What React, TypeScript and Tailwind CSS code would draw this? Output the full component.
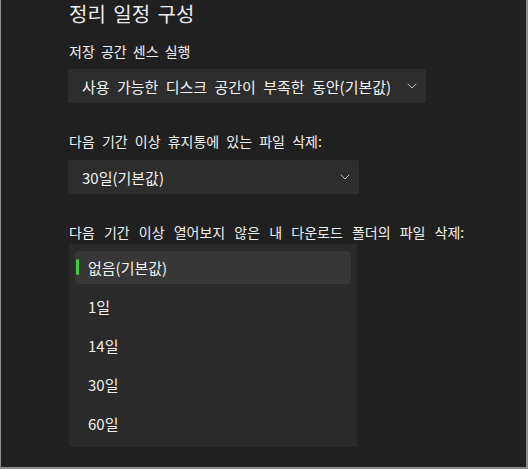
import { ChevronDown } from "lucide-react";

const FONT = { fontFamily: '"Noto Sans CJK KR", "Noto Sans", sans-serif' };

const OPTIONS = ["없음(기본값)", "1일", "14일", "30일", "60일"];

function Select({ value, width }: { value: string; width: string }) {
  return (
    <div
      className={`flex h-[34px] items-center justify-between rounded-[2px] bg-[#2d2d2d] pl-[14px] pr-[6px] ${width}`}
    >
      <span className="text-[15px] leading-none text-[#f2f2f2] [word-spacing:4px]">{value}</span>
      <ChevronDown size={16} strokeWidth={1.4} className="text-[#c4c4c4]" />
    </div>
  );
}

function Flyout({ selected }: { selected: number }) {
  return (
    <div className="ml-[1px] flex w-[288px] flex-col bg-[#2a2a2a] py-[4px]">
      {OPTIONS.map((opt, i) => (
        <div key={opt} className="flex h-[39px] items-center px-[6px] py-[3px]">
          <div
            className={
              "relative flex h-full w-full items-center rounded-[4px] pl-[13px] " +
              (i === selected ? "bg-[#373737]" : "")
            }
          >
            {i === selected && (
              <span className="absolute left-[1px] top-[8px] h-[16px] w-[3px] rounded-full bg-[#3cd03c]" />
            )}
            <span className="text-[15px] leading-none text-[#f0f0f0]">{opt}</span>
          </div>
        </div>
      ))}
    </div>
  );
}

export default function App() {
  return (
    <div
      className="h-[469px] w-[528px] overflow-hidden border-b-2 border-l border-r-2 border-[#8c8c8c] bg-[#202020]"
      style={FONT}
    >
      <div className="flex flex-col pl-[67px] pt-[1px]">
        <h1 className="ml-[1px] text-[20px] leading-[26px] text-[#ececec] [word-spacing:3px]">
          정리 일정 구성
        </h1>

        <p className="ml-[1px] mt-[14px] text-[14px] leading-[20px] text-[#f0f0f0] [word-spacing:3px]">
          저장 공간 센스 실행
        </p>
        <div className="mt-[8px]">
          <Select value="사용 가능한 디스크 공간이 부족한 동안(기본값)" width="w-[358px]" />
        </div>

        <p className="ml-[1px] mt-[28px] text-[14px] leading-[20px] text-[#f0f0f0] [word-spacing:4px]">
          다음 기간 이상 휴지통에 있는 파일 삭제:
        </p>
        <div className="mt-[9px]">
          <Select value="30일(기본값)" width="w-[291px]" />
        </div>

        <p className="ml-[1px] mt-[28px] text-[14px] leading-[20px] text-[#f0f0f0] [word-spacing:6px]">
          다음 기간 이상 열어보지 않은 내 다운로드 폴더의 파일 삭제:
        </p>
        <div className="mt-[2px]">
          <Flyout selected={0} />
        </div>
      </div>
    </div>
  );
}
